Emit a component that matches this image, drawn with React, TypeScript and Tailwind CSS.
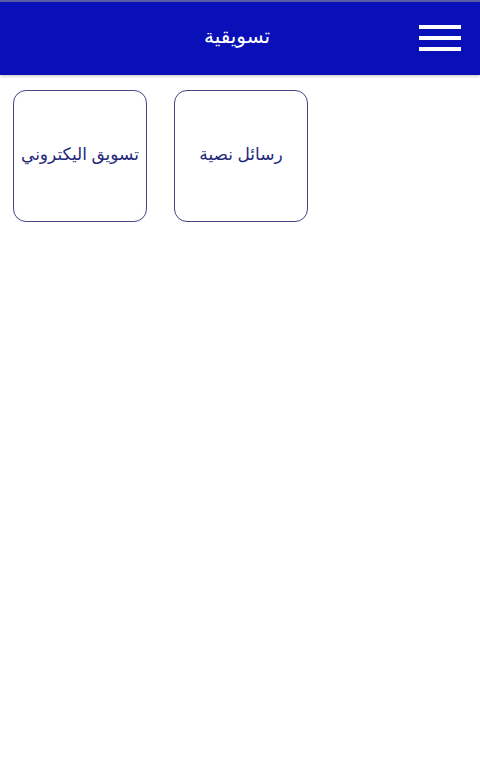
import React from "react";

export default function App() {
  return (
    <div className="w-[480px] h-[767px] bg-white relative" style={{ fontFamily: '"Noto Sans", "DejaVu Sans", sans-serif' }}>
      <div className="h-[2px] bg-[#5a5fa8]" />
      <header className="h-[73px] bg-[#0a10b8] flex items-center relative shadow-[0_1px_3px_rgba(0,0,0,0.25)]">
        <div className="flex-1 text-center text-white text-[20px] leading-none pb-[6px] pr-[6px]" dir="rtl">تسويقية</div>
        <div className="absolute right-[19px] top-[23px] w-[42px] flex flex-col gap-[7px]">
          <span className="block h-[4px] bg-white" />
          <span className="block h-[4px] bg-white" />
          <span className="block h-[4px] bg-white" />
        </div>
      </header>
      <div className="flex gap-[27px] pl-[13px] pt-[15px]">
        <div className="w-[134px] h-[132px] border-[1.5px] border-[#434588] rounded-[13px] flex items-center justify-center text-[#25287a] text-[17px] pb-[4px]" dir="rtl">
          تسويق اليكتروني
        </div>
        <div className="w-[134px] h-[132px] border-[1.5px] border-[#434588] rounded-[13px] flex items-center justify-center text-[#25287a] text-[17px] pb-[4px]" dir="rtl">
          رسائل نصية
        </div>
      </div>
    </div>
  );
}
